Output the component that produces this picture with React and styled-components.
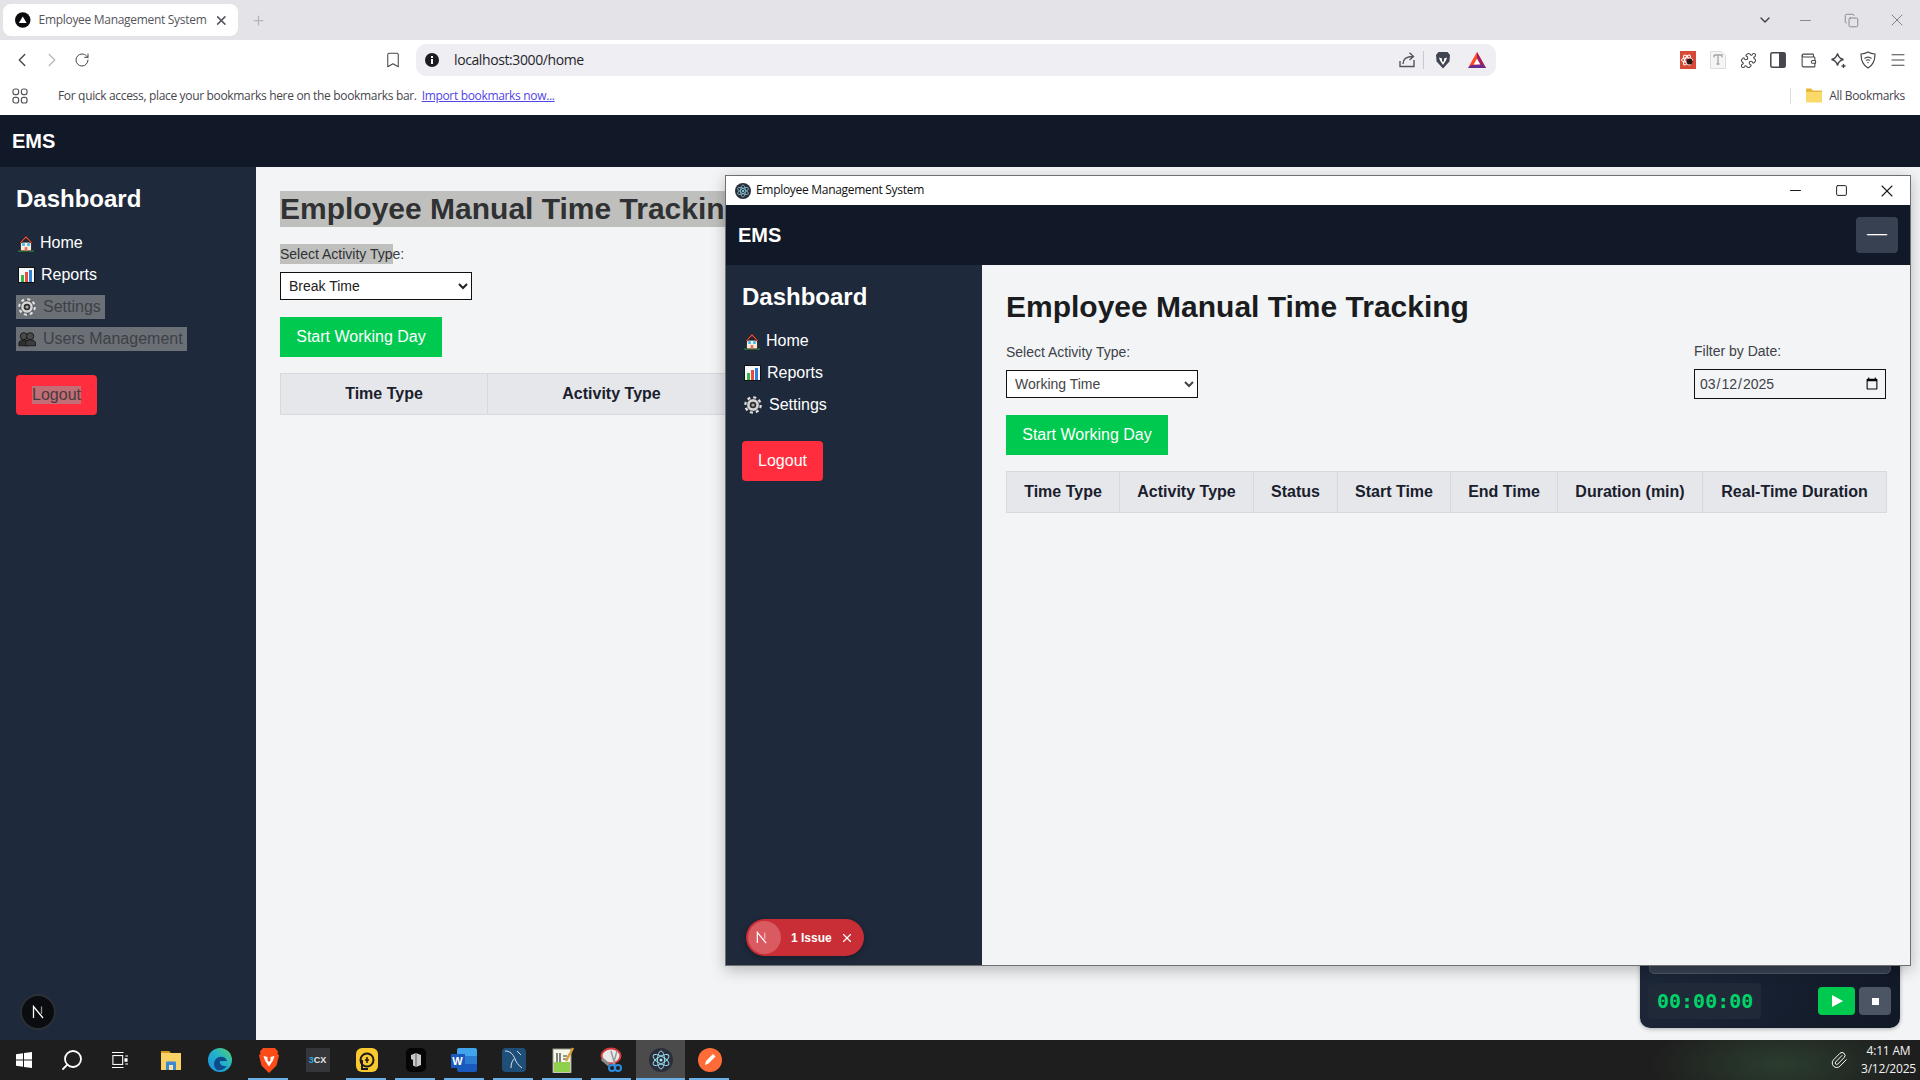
import React from 'react';
import styled, { createGlobalStyle } from 'styled-components';
import {
  ChevronLeft, ChevronRight, ChevronDown, RotateCw, Bookmark, Minus, X, Square, Copy, Plus,
  Puzzle, Wallet, Menu, Search, Paperclip,
} from 'lucide-react';

const UI_FONT = '"Open Sans", "Noto Sans", sans-serif';

const GlobalStyle = createGlobalStyle`
  html, body { margin: 0; padding: 0; background: #f3f4f6; }
  * { box-sizing: border-box; }
  body { font-family: "Liberation Sans", Arial, sans-serif; }
`;

/* ---------- drawn icons ---------- */

const TabLogo = () => (
  <svg width="16" height="16" viewBox="0 0 16 16">
    <circle cx="8" cy="8" r="8" fill="#0b0b0f" />
    <path d="M8 4.4 12 11H4z" fill="#fff" />
  </svg>
);

const InfoDot = () => (
  <svg width="14" height="14" viewBox="0 0 14 14">
    <circle cx="7" cy="7" r="7" fill="#1c1c22" />
    <rect x="6" y="6" width="2" height="5" fill="#fff" />
    <rect x="6" y="3" width="2" height="2" fill="#fff" />
  </svg>
);

const AppsGrid = () => (
  <svg width="16" height="16" viewBox="0 0 16 16" fill="none" stroke="#55555c" strokeWidth="1.2">
    <rect x="1" y="1" width="5.6" height="5.6" rx="2" />
    <rect x="9.4" y="1" width="5.6" height="5.6" rx="2" />
    <rect x="1" y="9.4" width="5.6" height="5.6" rx="2" />
    <rect x="9.4" y="9.4" width="5.6" height="5.6" rx="2" />
  </svg>
);

const ShareArrow = () => (
  <svg width="18" height="18" viewBox="0 0 18 18" fill="none" stroke="#55555c" strokeWidth="1.4">
    <path d="M16 9v6.5H2V10" />
    <path d="M5 13c0-5 3-7.5 10-7.5M11.5 1.8 15.5 5.500 11.500 9" />
  </svg>
);

const BraveLion = ({ size = 18 }) => (
  <svg width={size} height={size} viewBox="0 0 18 18">
    <path d="M4.500 1h9l2.500 3-.6 6.500L9 17.500 2.600 10.500 2 4z" fill="#3f4450" />
    <path d="M5 6.500 8 7.500V10l1 1 1-1V7.500l3-1-1 3-3 4.500-3-4.500z" fill="#fff" />
  </svg>
);

const BatTriangle = () => (
  <svg width="18" height="16" viewBox="0 0 18 16">
    <path d="M9 0 18 16H0z" fill="#ff4724" />
    <path d="M9 0 18 16H9z" fill="#9e1f63" />
    <path d="M0 16 3 13h12l3 3z" fill="#662d91" />
    <path d="M9 6.500 12.300 12.500H5.700z" fill="#fff" />
  </svg>
);

const ReactExt = () => (
  <svg width="16" height="18" viewBox="0 0 16 18">
    <rect width="16" height="18" fill="#d84a38" />
    <g fill="none" stroke="#fff" strokeWidth="1">
      <ellipse cx="7" cy="9" rx="5.500" ry="2.200" />
      <ellipse cx="7" cy="9" rx="5.500" ry="2.200" transform="rotate(60 7 9)" />
      <ellipse cx="7" cy="9" rx="5.500" ry="2.200" transform="rotate(120 7 9)" />
    </g>
    <circle cx="9.500" cy="10.500" r="3" fill="#231815" />
  </svg>
);

const TextExt = () => (
  <svg width="16" height="18" viewBox="0 0 16 18">
    <path d="M.5.500h11l4 4v13H.5z" fill="#f5f5f5" stroke="#dddddd" />
    <path d="M4 4h8v2.500M4 6.500V4M8 4v9M6.500 13h3" fill="none" stroke="#a3a3a3" strokeWidth="1.300" />
  </svg>
);

const SidePanelIcon = () => (
  <svg width="16" height="16" viewBox="0 0 16 16">
    <rect x=".8" y=".8" width="14.400" height="14.400" rx="1.500" fill="none" stroke="#46464c" strokeWidth="1.500" />
    <rect x="9" y="1" width="6" height="14" fill="#46464c" />
  </svg>
);

const StarPlusIcon = () => (
  <svg width="17" height="17" viewBox="0 0 17 17" fill="none" stroke="#46464c" strokeWidth="1.300">
    <path d="M7.500 1.500c.8 3.700 2.300 5.200 6 6-3.700.8-5.200 2.300-6 6-.8-3.700-2.300-5.200-6-6 3.700-.8 5.200-2.300 6-6z" />
    <path d="M13.500 12v4M11.500 14h4" />
  </svg>
);

const WifiShieldIcon = () => (
  <svg width="16" height="18" viewBox="0 0 16 18" fill="none" stroke="#46464c" strokeWidth="1.200">
    <path d="M8 1c2 1.200 4 1.800 7 2 0 6.500-1.500 11-7 14C2.500 14 1 9.500 1 3c3-.2 5-.8 7-2z" />
    <path d="M4.500 7.500c2-1.600 5-1.600 7 0M6 9.500c1.200-.9 2.800-.9 4 0" />
    <circle cx="8" cy="11.500" r=".7" fill="#46464c" stroke="none" />
  </svg>
);

const FolderIcon = () => (
  <svg width="16" height="15" viewBox="0 0 16 15">
    <path d="M0 1.500C0 .8.500.500 1 .500h4l2 2h8c.6 0 1 .4 1 1V5H0z" fill="#e8b63a" />
    <path d="M0 4h16v9.500c0 .6-.4 1-1 1H1c-.6 0-1-.4-1-1z" fill="#fbd968" />
  </svg>
);

const HouseEmoji = () => (
  <svg width="16" height="17" viewBox="1 .5 14 15.500">
    <path d="M1 16h14v-1.500H1z" fill="#2b7a35" />
    <path d="M3 7h10v8H3z" fill="#fbeee0" stroke="#1a1a1a" strokeWidth=".7" />
    <path d="M8 1 1.500 8h2L8 3.400 12.500 8h2z" fill="#e8553c" stroke="#1a1a1a" strokeWidth=".7" />
    <rect x="4.500" y="8" width="2.500" height="2.500" fill="#3fb8ec" />
    <rect x="9" y="8" width="2.500" height="2.500" fill="#3fb8ec" />
    <rect x="6.800" y="11.500" width="2.400" height="3.500" fill="#ef6a4c" />
  </svg>
);

const ChartEmoji = () => (
  <svg width="17" height="16" viewBox="0 0 17 16">
    <rect x=".5" y=".5" width="16" height="15" fill="#f4f7fa" stroke="#111" />
    <rect x="3" y="8" width="3" height="7" fill="#39b54a" />
    <rect x="7" y="5" width="3" height="10" fill="#e74c3c" />
    <rect x="11" y="3" width="3" height="12" fill="#2f80d6" />
  </svg>
);

const GearEmoji = () => (
  <svg width="18" height="18" viewBox="0 0 18 18">
    <circle cx="9" cy="9" r="7.300" fill="none" stroke="#e2e2e2" strokeWidth="3" strokeDasharray="2.900 2.830" />
    <circle cx="9" cy="9" r="6.300" fill="#d6d6d6" stroke="#1b1b1b" strokeWidth=".7" />
    <circle cx="9" cy="9" r="3.300" fill="#2e2e2e" />
    <circle cx="9" cy="9" r="1.600" fill="#a8a8a8" />
  </svg>
);

const UsersEmoji = () => (
  <svg width="18" height="16" viewBox="0 0 20 16">
    <circle cx="6.500" cy="5" r="4" fill="#4a4a4a" stroke="#161616" />
    <circle cx="13.500" cy="5" r="4" fill="#4a4a4a" stroke="#161616" />
    <path d="M1 15.500v-2.500c0-2.500 2-4 5.500-4s5 1.500 5 4v2.500z" fill="#2f2f2f" stroke="#161616" />
    <path d="M8.500 15.500v-2.500c0-2.500 2-4 5.500-4s5.500 1.500 5.500 4v2.500z" fill="#3c3c3c" stroke="#161616" />
  </svg>
);

const NextMark = ({ size = 14, tint = '#fff' }) => (
  <svg width={size} height={size} viewBox="0 0 14 14" fill="none" stroke={tint} strokeWidth="1.300">
    <path d="M2.500 13V1.500L12 13" />
    <path d="M10.500 1.500V9" opacity=".55" />
  </svg>
);

const ElectronIcon = ({ size = 24 }) => (
  <svg width={size} height={size} viewBox="0 0 24 24">
    <circle cx="12" cy="12" r="12" fill="#2b2e3a" />
    <g fill="none" stroke="#9feaf9" strokeWidth=".9">
      <ellipse cx="12" cy="12" rx="9" ry="3.500" transform="rotate(30 12 12)" />
      <ellipse cx="12" cy="12" rx="9" ry="3.500" transform="rotate(90 12 12)" />
      <ellipse cx="12" cy="12" rx="9" ry="3.500" transform="rotate(150 12 12)" />
    </g>
    <circle cx="12" cy="12" r="1.500" fill="#9feaf9" />
  </svg>
);

const WindowsLogo = () => (
  <svg width="18" height="18" viewBox="0 0 18 18" fill="#fff">
    <path d="M1 3.200 8 2.200V8.500H1zM9 2 17 1V8.500H9zM1 9.500H8V15.800L1 14.800zM9 9.500H17V17L9 16z" />
  </svg>
);

const TaskView = () => (
  <svg width="16" height="20" viewBox="0 0 18 20" fill="none" stroke="#fff" strokeWidth="1.200">
    <rect x="1" y="5" width="11" height="10" />
    <path d="M0 1.500h13M0 18.500h13" />
    <path d="M15 5.500h3M15 14.500h3" />
    <rect x="14" y="8" width="3.500" height="4" fill="#fff" stroke="none" />
  </svg>
);

const ExplorerIcon = () => (
  <svg width="24" height="24" viewBox="0 0 24 24">
    <path d="M2 3h8l2 2H2z" fill="#d99a1c" />
    <rect x="2" y="5" width="20" height="17" fill="#fad165" />
    <path d="M7 22v-7c0-1 .500-1.500 1-1.500h8c.5 0 1 .5 1 1.500v7z" fill="#3a8ad6" />
    <rect x="10" y="17" width="4" height="5" fill="#fbe39a" />
  </svg>
);

const EdgeIcon = () => (
  <svg width="24" height="24" viewBox="0 0 24 24">
    <defs>
      <linearGradient id="edgeFill" x1="0" y1="1" x2="1" y2="0">
        <stop offset="0" stopColor="#1b8fe0" />
        <stop offset=".55" stopColor="#22b3c8" />
        <stop offset="1" stopColor="#5ad06a" />
      </linearGradient>
    </defs>
    <circle cx="12" cy="12" r="12" fill="url(#edgeFill)" />
    <path d="M9 22c-4-3-4-9 0-12 4-2.500 9-1 10 3h-7c-1 3 2 6 7 5-2 3-6 5-10 4z" fill="#0f4a8a" />
  </svg>
);

const BraveTask = () => (
  <svg width="22" height="25" viewBox="0 0 22 25">
    <path d="M5 0h12l3 3.500-.5 2 1.500 2-2.500 10L11 25 3.500 17.500 1 7.500l1.500-2-.5-2z" fill="#fb4b17" />
    <path d="M5.500 8 9.500 9v3.500L11 14l1.500-1.500V9l4-1-1.500 4.500-4 6-4-6z" fill="#fff" />
  </svg>
);

const ThreeCx = styled.span`
  display: flex;
  align-items: center;
  justify-content: center;
  width: 24px;
  height: 24px;
  background: #35363a;
  color: #e8e8e8;
  font: 700 9px "Liberation Sans", sans-serif;
  & > b { color: #2ba6e8; font-weight: 700; }
`;

const LdIcon = () => (
  <svg width="22" height="24" viewBox="0 0 22 24">
    <rect width="22" height="24" rx="6" fill="#fac82f" />
    <circle cx="11" cy="12" r="6.500" fill="none" stroke="#1b1b1b" strokeWidth="2" />
    <path d="M6 12v9h6" fill="none" stroke="#1b1b1b" strokeWidth="2" />
    <path d="M11 9v6M9 12h4" stroke="#1b1b1b" strokeWidth="1.500" />
  </svg>
);

const BoxIcon = () => (
  <svg width="20" height="24" viewBox="0 0 20 24">
    <rect width="20" height="24" rx="5" fill="#050505" />
    <path d="M5 7 10 5l5 2v10l-5 2-3-1.500V12L5 11z" fill="#c8c8c8" />
    <path d="M10 5v14" stroke="#5a5a5a" />
  </svg>
);

const WordTile = styled.span`
  position: relative;
  display: block;
  width: 20px;
  height: 24px;
  margin-left: 4px;
  background: linear-gradient(#41a5ee 0 33%, #2b7cd3 33% 66%, #185abd 66%);
  border-radius: 2px;
`;

const WordLetter = styled.span`
  position: absolute;
  left: -6px;
  top: 6px;
  width: 14px;
  height: 14px;
  background: #185abd;
  color: #fff;
  font: 700 11px/14px "Liberation Sans", sans-serif;
  text-align: center;
`;

const MysqlIcon = () => (
  <svg width="24" height="24" viewBox="0 0 24 24">
    <rect width="24" height="24" rx="4" fill="#1f4e79" />
    <path d="M3 3c5 0 8 3 10 8 1 3 3 6 7 9M15 3l4 4M12 11c-2 2-3 5-3 9" fill="none" stroke="#d5e4ef" strokeWidth="1" />
  </svg>
);

const NotepadIcon = () => (
  <svg width="24" height="26" viewBox="0 0 24 26">
    <rect x="2" y="2" width="18" height="24" fill="#f7f7ea" stroke="#9a9a8a" />
    <rect x="3" y="15" width="16" height="10" fill="#8fd14f" />
    <path d="M6 6v9M9 6v9M12 9h4M12 12h4" stroke="#333" strokeWidth="1.200" />
    <path d="M22 1 15 14" stroke="#d8a13a" strokeWidth="2.500" />
  </svg>
);

const SnipIcon = () => (
  <svg width="24" height="26" viewBox="0 0 24 26">
    <ellipse cx="11" cy="9" rx="9.500" ry="7.500" fill="#e8e8e8" stroke="#d83a3a" strokeWidth="2" />
    <path d="M2 12 9 18" stroke="#8a8a8a" strokeWidth="3" />
    <path d="M11 4 15 18M17 4 13 18" stroke="#9a9a9a" strokeWidth="1.500" />
    <circle cx="12" cy="21" r="3" fill="none" stroke="#2b8ce0" strokeWidth="2" />
    <circle cx="18" cy="21" r="3" fill="none" stroke="#2b8ce0" strokeWidth="2" />
  </svg>
);

const PostmanIcon = () => (
  <svg width="24" height="24" viewBox="0 0 24 24">
    <circle cx="12" cy="12" r="12" fill="#ff6c37" />
    <path d="M7 17l1-4 7-7 2.500 2.500-7 7z" fill="#fff" />
  </svg>
);

/* ---------- browser chrome ---------- */

const Screen = styled.div`
  position: relative;
  display: flex;
  flex-direction: column;
  width: 1920px;
  height: 1080px;
  overflow: hidden;
`;

const TabStrip = styled.div`
  display: flex;
  align-items: center;
  height: 40px;
  padding-left: 3px;
  background: #e3e3e8;
  color: #4c4c52;
`;

const Tab = styled.div`
  display: flex;
  align-items: center;
  width: 235px;
  height: 32px;
  padding: 0 9px 0 12px;
  background: #fff;
  border-radius: 8px;
  gap: 8px;
`;

const TabTitle = styled.span`
  flex: 1;
  margin-top: -2px;
  font: 12px ${UI_FONT};
  letter-spacing: -0.3px;
  color: #55555c;
  white-space: nowrap;
`;

const NewTab = styled.span`
  display: flex;
  margin-left: 13px;
  color: #b4b4ba;
`;

const ChromeControls = styled.div`
  display: flex;
  margin-left: auto;
`;

const ChromeControl = styled.span`
  display: flex;
  align-items: center;
  justify-content: center;
  width: ${(p) => p.$width || 46}px;
  color: ${(p) => p.$tint || '#77777d'};
`;

const Toolbar = styled.div`
  display: flex;
  align-items: center;
  height: 40px;
  padding: 0 7px;
  background: #fff;
`;

const ToolButton = styled.span`
  display: flex;
  align-items: center;
  justify-content: center;
  width: 30px;
  height: 30px;
  color: ${(p) => p.$tint || '#46464c'};
  ${(p) => p.$push && `margin-left: ${p.$push}px;`}
`;

const AddressBar = styled.div`
  display: flex;
  align-items: center;
  width: 1080px;
  height: 32px;
  margin-left: 8px;
  padding: 0 10px 0 9px;
  background: #eeeef3;
  border-radius: 10px;
`;

const Url = styled.span`
  flex: 1;
  margin: -1px 0 0 15px;
  font: 14px ${UI_FONT};
  letter-spacing: -0.4px;
  color: #26262b;
`;

const AddressDivider = styled.span`
  width: 1px;
  height: 18px;
  margin: 0 10px 0 7px;
  background: #c9c9ce;
`;

const BatSlot = styled.span`
  display: flex;
  margin-left: 16px;
`;

const ExtGroup = styled.div`
  display: flex;
  margin-left: 177px;
`;

const BookmarksBar = styled.div`
  display: flex;
  align-items: center;
  height: 35px;
  padding: 0 15px 4px 12px;
  background: #fff;
  font: 12px ${UI_FONT};
  letter-spacing: -0.33px;
  color: #46464c;
`;

const BookmarksHint = styled.span`
  margin-left: 30px;
`;

const ImportLink = styled.a`
  margin-left: 5px;
  color: #4f46e5;
  text-decoration: underline;
`;

const AllBookmarks = styled.span`
  display: flex;
  align-items: center;
  margin-left: auto;
  padding-left: 15px;
  border-left: 1px solid #dcdce0;
  gap: 7px;
  height: 16px;
`;

/* ---------- EMS app ---------- */

const AppRoot = styled.div`
  display: flex;
  flex-direction: column;
  flex: 1;
  min-height: 0;
`;

const NavBar = styled.header`
  display: flex;
  align-items: center;
  justify-content: space-between;
  flex: none;
  height: ${(p) => p.$height}px;
  padding: 0 12px;
  background: #111827;
  color: #fff;
`;

const Brand = styled.span`
  font-size: 20px;
  font-weight: 700;
`;

const Toggle = styled.button`
  width: 42px;
  height: 36px;
  padding: 0 0 4px;
  border: 0;
  border-radius: 4px;
  background: #374151;
  color: #fff;
  font: 20px "Liberation Sans", sans-serif;
`;

const Body = styled.div`
  display: flex;
  flex: 1;
  min-height: 0;
`;

const Sidebar = styled.aside`
  position: relative;
  flex: none;
  width: 256px;
  padding: 16px;
  background: #1e293b;
  color: #fff;
`;

const SideTitle = styled.h2`
  margin: 0 0 16px;
  font-size: 24px;
  line-height: 32px;
`;

const NavList = styled.nav`
  display: flex;
  flex-direction: column;
  align-items: flex-start;
  gap: 8px;
`;

const NavItem = styled.a`
  display: inline-flex;
  align-items: center;
  height: 24px;
  padding: 0 ${(p) => (p.$selected ? 4 : 0)}px 0 2px;
  font-size: 16px;
  gap: 6px;
  background: ${(p) => (p.$selected ? '#6b7076' : 'transparent')};
  color: ${(p) => (p.$selected ? '#3d4046' : '#fff')};
`;

const NavGlyph = styled.span`
  display: flex;
  flex: none;
  justify-content: flex-start;
  width: ${(p) => p.$width}px;
`;

const LogoutButton = styled.button`
  display: block;
  width: 81px;
  height: 40px;
  margin-top: 24px;
  border: 0;
  border-radius: 4px;
  background: #ff2d3d;
  color: #fff;
  font: 16px "Liberation Sans", sans-serif;
`;

const Selection = styled.span`
  display: ${(p) => (p.$block ? 'inline-block' : 'inline')};
  background: ${(p) => p.$bg || '#bfc0be'};
  color: ${(p) => p.$fg || '#303132'};
`;

const Main = styled.main`
  flex: 1;
  min-width: 0;
  padding: 24px;
  background: #f3f4f6;
`;

const PageTitle = styled.h1`
  margin: 0 0 16px;
  font-size: 30px;
  line-height: 36px;
  white-space: nowrap;
  color: #1a1c20;
`;

const FilterRow = styled.div`
  display: flex;
  align-items: center;
  justify-content: space-between;
  margin-bottom: 16px;
`;

const Field = styled.label`
  display: flex;
  flex-direction: column;
  gap: 8px;
  width: 192px;
  font-size: 14px;
  line-height: 20px;
  color: #3d4148;
`;

const ActivitySelect = styled.select`
  width: 192px;
  height: 28px;
  padding: 0 4px;
  border: 1px solid #111;
  border-radius: 0;
  background: #fff;
  font: 14px "Liberation Sans", sans-serif;
  color: ${(p) => p.$tone};
`;

const DateInput = styled.input`
  width: 192px;
  height: 30px;
  padding: 0 4px;
  border: 1px solid #111;
  background: #f3f4f6;
  font: 14px "Liberation Sans", sans-serif;
  color: #3d4148;
`;

const StartButton = styled.button`
  display: block;
  width: 162px;
  height: 40px;
  margin-bottom: 16px;
  border: 0;
  background: #00c950;
  color: #fff;
  font: 16px "Liberation Sans", sans-serif;
`;

const LogTable = styled.table`
  width: 100%;
  table-layout: fixed;
  border-collapse: collapse;
`;

const HeadCell = styled.th`
  height: 41px;
  padding: 0;
  border: 1px solid #d6d9df;
  background: #e5e7eb;
  font-size: 16px;
  font-weight: 700;
  color: #1a202c;
  white-space: nowrap;
`;

const COLUMNS = ['Time Type', 'Activity Type', 'Status', 'Start Time', 'End Time', 'Duration (min)', 'Real-Time Duration'];

const NAV = [
  { label: 'Home', Icon: HouseEmoji, width: 16 },
  { label: 'Reports', Icon: ChartEmoji, width: 17 },
  { label: 'Settings', Icon: GearEmoji, width: 19, dim: true },
  { label: 'Users Management', Icon: UsersEmoji, width: 19, dim: true, admin: true },
];

function EmsApp({ navHeight, selected, activity, activityTone, widths, admin, toggle, children }) {
  const mark = (text, extra) => (selected ? <Selection {...extra}>{text}</Selection> : text);
  return (
    <AppRoot>
      <NavBar $height={navHeight}>
        <Brand>EMS</Brand>
        {toggle && <Toggle>—</Toggle>}
      </NavBar>
      <Body>
        <Sidebar>
          <SideTitle>Dashboard</SideTitle>
          <NavList>
            {NAV.filter((item) => admin || !item.admin).map(({ label, Icon, width, dim }) => (
              <NavItem key={label} $selected={selected && dim}>
                <NavGlyph $width={width}><Icon /></NavGlyph>
                {label}
              </NavItem>
            ))}
          </NavList>
          <LogoutButton>
            {mark('Logout', { $bg: '#c26e76', $fg: '#4a3a3d', $block: true })}
          </LogoutButton>
          {children}
        </Sidebar>
        <Main>
          <PageTitle>{mark('Employee Manual Time Tracking', { $block: true })}</PageTitle>
          <FilterRow>
            <Field>
              <span>
                {selected ? <><Selection $block>Select Activity Typ</Selection>e:</> : 'Select Activity Type:'}
              </span>
              <ActivitySelect $tone={activityTone} defaultValue={activity}>
                <option>Working Time</option>
                <option>Break Time</option>
              </ActivitySelect>
            </Field>
            <Field>
              <span>Filter by Date:</span>
              <DateInput type="date" defaultValue="2025-03-12" />
            </Field>
          </FilterRow>
          <StartButton>Start Working Day</StartButton>
          <LogTable>
            <colgroup>
              {widths.map((w, i) => <col key={i} width={w} />)}
            </colgroup>
            <thead>
              <tr>
                {COLUMNS.map((c) => <HeadCell key={c}>{c}</HeadCell>)}
              </tr>
            </thead>
          </LogTable>
        </Main>
      </Body>
    </AppRoot>
  );
}

/* ---------- floating bits ---------- */

const DevBadge = styled.span`
  position: absolute;
  left: 20px;
  bottom: 10px;
  display: flex;
  align-items: center;
  justify-content: center;
  width: 36px;
  height: 36px;
  border: 2px solid #2b2f36;
  border-radius: 50%;
  background: #0a0c10;
`;

const IssuePill = styled.div`
  position: absolute;
  left: 20px;
  bottom: 9px;
  display: flex;
  align-items: center;
  width: 118px;
  height: 37px;
  padding: 0 2px;
  border-radius: 19px;
  background: #c92d35;
  box-shadow: 0 2px 6px rgba(0, 0, 0, 0.3);
  color: #fff;
  font-size: 12px;
  font-weight: 700;
`;

const IssueMark = styled.span`
  display: flex;
  align-items: center;
  justify-content: center;
  width: 33px;
  height: 33px;
  margin-right: 10px;
  padding-right: 6px;
  border-radius: 50%;
  background: #da5a61;
`;

const IssueClose = styled.span`
  display: flex;
  margin-left: 8px;
`;

const TimerWidget = styled.div`
  position: absolute;
  left: 1640px;
  top: 900px;
  width: 260px;
  height: 128px;
  padding: 0 9px;
  border-radius: 0 0 10px 10px;
  background: linear-gradient(120deg, #1e293b, #111827);
  box-shadow: 0 1px 4px rgba(0, 0, 0, 0.3);
`;

const TimerStrip = styled.div`
  height: 74px;
  border: 1px solid #4b5563;
  border-radius: 0 0 5px 5px;
  background: #374151;
`;

const TimerRow = styled.div`
  display: flex;
  align-items: center;
  margin: 9px 0 0 -1px;
`;

const TimerDisplay = styled.div`
  width: 113px;
  height: 36px;
  padding-left: 9px;
  border-radius: 4px;
  background: #1f2937;
  color: #00d26a;
  font: 700 20px/36px "DejaVu Sans Mono", monospace;
`;

const PlayButton = styled.span`
  display: flex;
  align-items: center;
  justify-content: center;
  width: 37px;
  height: 28px;
  margin-left: auto;
  border-radius: 4px;
  background: #00c950;
`;

const StopButton = styled.span`
  display: flex;
  align-items: center;
  justify-content: center;
  width: 32px;
  height: 28px;
  margin-left: 4px;
  border-radius: 4px;
  background: #4b5563;
`;

const StopDot = styled.span`
  width: 7px;
  height: 7px;
  background: #fff;
`;

const Window = styled.section`
  position: absolute;
  left: 725px;
  top: 175px;
  display: flex;
  flex-direction: column;
  width: 1186px;
  height: 791px;
  border: 1px solid #6f7070;
  background: #fff;
  box-shadow: 0 4px 14px rgba(0, 0, 0, 0.25);
`;

const TitleBar = styled.div`
  display: flex;
  align-items: center;
  flex: none;
  height: 29px;
  padding-left: 9px;
  gap: 5px;
  background: #fff;
`;

const TitleText = styled.span`
  margin-top: -2px;
  font: 12px ${UI_FONT};
  letter-spacing: -0.3px;
  color: #111;
`;

const WinControls = styled.div`
  display: flex;
  margin-left: auto;
`;

const WinControl = styled.span`
  display: flex;
  align-items: center;
  justify-content: center;
  width: 46px;
  color: #1a1a1a;
`;

/* ---------- taskbar ---------- */

const Taskbar = styled.footer`
  display: flex;
  align-items: center;
  flex: none;
  height: 40px;
  background:
    radial-gradient(ellipse 130px 50px at 1780px 60%, #2b3d2e, transparent),
    #1e1e1e;
  color: #fff;
`;

const TaskGroup = styled.div`
  display: flex;
  margin-left: ${(p) => p.$offset || 0}px;
`;

const TaskItem = styled.span`
  position: relative;
  display: flex;
  align-items: center;
  justify-content: center;
  width: ${(p) => p.$width}px;
  height: 40px;
  background: ${(p) => (p.$active ? '#4b4b4b' : 'transparent')};

  ${(p) => p.$open && `
    &::after {
      content: '';
      position: absolute;
      left: ${p.$active ? 0 : 4}px;
      right: ${p.$active ? 0 : 5}px;
      bottom: 0;
      height: 2px;
      background: #6cb0e8;
    }
  `}
`;

const Tray = styled.div`
  display: flex;
  align-items: center;
  margin-left: auto;
  padding-right: 4px;
`;

const Clock = styled.div`
  margin-left: 13px;
  font: 12px/18px ${UI_FONT};
  letter-spacing: -0.2px;
  text-align: center;
  color: #f2f2f2;
`;

const PINNED = [
  { key: 'explorer', node: <ExplorerIcon /> },
  { key: 'edge', node: <EdgeIcon /> },
  { key: 'brave', node: <BraveTask />, open: true },
  { key: '3cx', node: <ThreeCx><b>3</b>CX</ThreeCx> },
  { key: 'ld', node: <LdIcon />, open: true },
  { key: 'box', node: <BoxIcon />, open: true },
  { key: 'word', node: <WordTile><WordLetter>W</WordLetter></WordTile>, open: true },
  { key: 'mysql', node: <MysqlIcon />, open: true },
  { key: 'notepad', node: <NotepadIcon />, open: true },
  { key: 'snip', node: <SnipIcon />, open: true },
  { key: 'electron', node: <ElectronIcon />, open: true, active: true },
  { key: 'postman', node: <PostmanIcon />, open: true },
];

export default function App() {
  return (
    <Screen>
      <GlobalStyle />
      <TabStrip>
        <Tab>
          <TabLogo />
          <TabTitle>Employee Management System</TabTitle>
          <X size={15} strokeWidth={2.4} color="#55555c" />
        </Tab>
        <NewTab><Plus size={15} /></NewTab>
        <ChromeControls>
          <ChromeControl $width={34} $tint="#3c3c42"><ChevronDown size={16} /></ChromeControl>
          <ChromeControl><Minus size={17} strokeWidth={1.2} /></ChromeControl>
          <ChromeControl><Copy size={15} strokeWidth={1.3} /></ChromeControl>
          <ChromeControl><X size={20} strokeWidth={1.1} /></ChromeControl>
        </ChromeControls>
      </TabStrip>
      <Toolbar>
        <ToolButton><ChevronLeft size={22} strokeWidth={1.5} /></ToolButton>
        <ToolButton $tint="#b9b9be"><ChevronRight size={22} strokeWidth={1.5} /></ToolButton>
        <ToolButton><RotateCw size={16} strokeWidth={1.5} /></ToolButton>
        <ToolButton $push={281}><Bookmark size={18} strokeWidth={1.4} /></ToolButton>
        <AddressBar>
          <InfoDot />
          <Url>localhost:3000/home</Url>
          <ShareArrow />
          <AddressDivider />
          <BraveLion />
          <BatSlot><BatTriangle /></BatSlot>
        </AddressBar>
        <ExtGroup>
          <ToolButton><ReactExt /></ToolButton>
          <ToolButton><TextExt /></ToolButton>
          <ToolButton><Puzzle size={17} strokeWidth={1.5} /></ToolButton>
          <ToolButton><SidePanelIcon /></ToolButton>
          <ToolButton><Wallet size={17} strokeWidth={1.5} /></ToolButton>
          <ToolButton><StarPlusIcon /></ToolButton>
          <ToolButton><WifiShieldIcon /></ToolButton>
          <ToolButton><Menu size={18} strokeWidth={1.5} /></ToolButton>
        </ExtGroup>
      </Toolbar>
      <BookmarksBar>
        <AppsGrid />
        <BookmarksHint>For quick access, place your bookmarks here on the bookmarks bar.</BookmarksHint>
        <ImportLink>Import bookmarks now...</ImportLink>
        <AllBookmarks>
          <FolderIcon />
          All Bookmarks
        </AllBookmarks>
      </BookmarksBar>

      <EmsApp
        navHeight={52}
        selected
        admin
        activity="Break Time"
        activityTone="#222"
        widths={[207, 248, 150, 190, 190, 250, 381]}
      >
        <DevBadge><NextMark /></DevBadge>
      </EmsApp>

      <Taskbar>
        <TaskGroup>
          <TaskItem $width={48}><WindowsLogo /></TaskItem>
          <TaskItem $width={48}><Search size={24} strokeWidth={1.8} style={{ transform: 'scaleX(-1)' }} /></TaskItem>
          <TaskItem $width={48}><TaskView /></TaskItem>
        </TaskGroup>
        <TaskGroup $offset={2}>
          {PINNED.map(({ key, node, open, active }) => (
            <TaskItem key={key} $width={49} $open={open} $active={active}>{node}</TaskItem>
          ))}
        </TaskGroup>
        <Tray>
          <Paperclip size={18} strokeWidth={1.3} />
          <Clock>4:11 AM<br />3/12/2025</Clock>
        </Tray>
      </Taskbar>

      <TimerWidget>
        <TimerStrip />
        <TimerRow>
          <TimerDisplay>00:00:00</TimerDisplay>
          <PlayButton>
            <svg width="12" height="12" viewBox="0 0 12 12"><path d="M1 0 12 6 1 12z" fill="#fff" /></svg>
          </PlayButton>
          <StopButton><StopDot /></StopButton>
        </TimerRow>
      </TimerWidget>

      <Window>
        <TitleBar>
          <ElectronIcon size={16} />
          <TitleText>Employee Management System</TitleText>
          <WinControls>
            <WinControl><Minus size={17} strokeWidth={1.5} /></WinControl>
            <WinControl><Square size={13} strokeWidth={1.8} /></WinControl>
            <WinControl><X size={20} strokeWidth={1.3} /></WinControl>
          </WinControls>
        </TitleBar>
        <EmsApp
          navHeight={60}
          toggle
          activity="Working Time"
          activityTone="#444"
          widths={[113, 134, 84, 113, 107, 145, 184]}
        >
          <IssuePill>
            <IssueMark><NextMark size={13} /></IssueMark>
            1 Issue
            <IssueClose><X size={14} /></IssueClose>
          </IssuePill>
        </EmsApp>
      </Window>
    </Screen>
  );
}
